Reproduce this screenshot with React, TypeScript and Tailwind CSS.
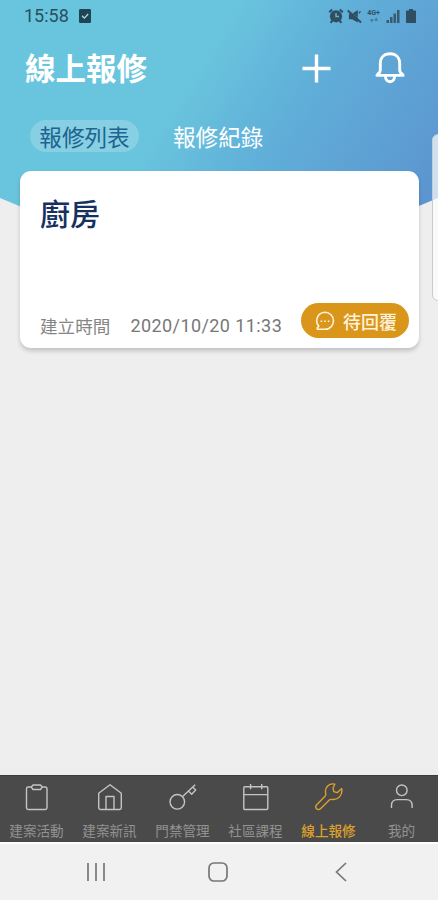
import React from 'react';

type IconProps = { className?: string };

const AlarmIcon = ({ className }: IconProps) => (
  <svg className={className} viewBox="0 0 16 16" fill="none" stroke="currentColor">
    <circle cx="8" cy="8.3" r="6.1" fill="currentColor" stroke="none" />
    <path d="M1.2 4.2 4.2 1.4M14.8 4.2l-3-2.8" strokeWidth="2" />
    <path d="M4.3 12.6 2.6 14.800M11.7 12.6l1.7 2.200" strokeWidth="2" />
    <path d="M8 5v3.5h3" stroke="#66b5d8" strokeWidth="1.4" />
  </svg>
);

const MuteIcon = ({ className }: IconProps) => (
  <svg className={className} viewBox="0 0 16 16" fill="none" stroke="currentColor">
    <path d="M2 5h3.500L11.500 1v13.500L5.500 11H2z" fill="currentColor" stroke="none" />
    <path d="M2.800 1.800 15 13" stroke="#66b1d8" strokeWidth=".7" />
    <path d="M.8 1.500 15 14.400" strokeWidth="2.200" />
    <path d="M12.500 4.500 14.500 2.500" strokeWidth="1.400" />
  </svg>
);

const SignalIcon = ({ className }: IconProps) => (
  <svg className={className} viewBox="0 0 14 14" fill="currentColor">
    <path d="M.5 11H3v3H.5zM4 8h2.500v6H4zM7.500 4.500H10V14H7.500zM11 1h2.500v13H11z" opacity=".85" />
  </svg>
);

const BatteryIcon = ({ className }: IconProps) => (
  <svg className={className} viewBox="0 0 10 14" fill="currentColor">
    <path d="M3 0h4v1.6h2c.6 0 1 .4 1 1V13c0 .6-.4 1-1 1H1c-.6 0-1-.4-1-1V2.600c0-.6.4-1 1-1h2z" />
  </svg>
);

const CheckBoxIcon = ({ className }: IconProps) => (
  <svg className={className} viewBox="0 0 12 14">
    <rect width="12" height="14" rx="1.2" fill="currentColor" />
    <path d="m3 6.800 2.300 2.300L9.200 5" fill="none" stroke="#a9dfec" strokeWidth="1.3" />
  </svg>
);

const BellIcon = () => (
  <svg className="size-8" viewBox="0 0 32 32" fill="none" stroke="white" strokeWidth="2.900" strokeLinejoin="round">
    <path d="M2.900 23.400c.2-1.500 3.400-2.600 3.400-5V11.500C6.300 5.800 10 1.800 16 1.800s9.700 4 9.700 9.700v6.900c0 2.400 3.200 3.500 3.400 5z" />
    <path d="M11.300 24c.3 3.700 1.800 5.700 4.700 5.700s4.400-2 4.700-5.700" />
  </svg>
);

const ChatIcon = () => (
  <svg className="size-5" viewBox="0 0 20 20" fill="none" stroke="#fff3dc" strokeWidth="1.600" strokeLinejoin="round">
    <path d="M10 1.300a8.400 8.400 0 1 1 0 17H2.300v-1.400l1.500-1.700A8.400 8.400 0 0 1 10 1.300z" />
    <path d="M5.600 10.200h1.600M9.200 10.200h1.600M12.800 10.200h1.600" strokeWidth="1.600" />
  </svg>
);

const ICONS = {
  clipboard: (
    <>
      <path d="M8.500 4H5.200A1.700 1.700 0 0 0 3.500 5.700v19.100a1.700 1.700 0 0 0 1.700 1.700h17.100a1.700 1.700 0 0 0 1.700-1.700V5.700A1.700 1.700 0 0 0 22.300 4H19" />
      <path d="M10 2h7.500l1.700 2-1.700 2.500H10L8.300 4z" />
    </>
  ),
  home: (
    <>
      <path d="M2.700 10.200 14 1.700l11.300 8.500v14.600c0 1-.7 1.700-1.700 1.700H4.400c-1 0-1.700-.7-1.700-1.700z" />
      <path d="M10 26.300V13.500h8v12.800" />
    </>
  ),
  key: (
    <>
      <circle cx="8.300" cy="18.800" r="7.300" />
      <path d="M13.600 13.500 26.200 1.700M19.500 8l3.200 3.200 4-4.200-3.100-2.900" />
    </>
  ),
  calendar: (
    <>
      <rect x="1.800" y="3.800" width="24" height="22.700" rx="1" />
      <path d="M1.800 11.600h24M8.600 1v5.200M19.700 1v5.200" />
    </>
  ),
  wrench: (
    <path d="M19.800 1.200c-5.600-1.500-10.500 3.300-9.100 9.300.3 1.200 0 2-.7 2.800L1.500 22a2.800 2.800 0 0 0 0 3.700 2.800 2.800 0 0 0 4 0l8.800-8.600c.8-.8 1.600-.9 2.700-.7 6 1.100 10.900-4.200 9.700-10.800l-4.500 4.100-3.400-1-.8-3.500z" />
  ),
  person: (
    <>
      <circle cx="13.800" cy="7.300" r="5.300" />
      <path d="M3.500 25v-2.600c0-3.600 2.200-5.800 5.800-5.800h9c3.600 0 5.800 2.200 5.800 5.800V25" />
    </>
  ),
};

const TABS: { label: string; icon: keyof typeof ICONS; active?: boolean }[] = [
  { label: '建案活動', icon: 'clipboard' },
  { label: '建案新訊', icon: 'home' },
  { label: '門禁管理', icon: 'key' },
  { label: '社區課程', icon: 'calendar' },
  { label: '線上報修', icon: 'wrench', active: true },
  { label: '我的', icon: 'person' },
];

const StatusBar = () => (
  <div className="flex h-8 items-center justify-between pl-6 pr-[22px] text-[#28505f]">
    <div className="flex items-center gap-[10px]">
      <span className="font-[Roboto] text-[18px] leading-8">15:58</span>
      <CheckBoxIcon className="h-[14px] w-3 text-[#1f4552]" />
    </div>
    <div className="flex items-center text-[#2f4e61]">
      <AlarmIcon className="size-4" />
      <MuteIcon className="ml-[3px] size-[15px]" />
      <div className="ml-1 flex w-[15px] flex-col items-center font-[Roboto] text-[7px] font-bold leading-[7px]">
        <span>4G+</span>
        <svg className="h-[6px] w-2 opacity-50" viewBox="0 0 8 6" fill="currentColor">
          <path d="M0 2h3.600L1.800 6zM4.400 4H8L6.200 0z" />
        </svg>
      </div>
      <SignalIcon className="ml-[5px] size-[14px]" />
      <BatteryIcon className="ml-[6px] h-[14px] w-[10px]" />
    </div>
  </div>
);

const RepairCard = () => (
  <div className="ml-5 mr-[19px] flex h-[177px] flex-col justify-between rounded-[11px] bg-white pl-5 pr-[10px] shadow-[0_3px_4px_rgba(0,0,0,0.18)]">
    <h2 className="pt-[19px] text-[30px] font-medium leading-[44px] text-[#17305f]">廚房</h2>
    <div className="flex items-end pb-[10px]">
      <span className="text-[17.600px] leading-6 text-[#858585]">建立時間</span>
      <span className="ml-5 whitespace-nowrap font-[Roboto] text-[18px] leading-6 tracking-[0.420px] text-[#777]">2020/10/20 11:33</span>
      <div className="ml-auto flex h-[35px] w-[108px] shrink-0 items-center gap-2 rounded-full bg-[#da951b] pl-[14px]">
        <ChatIcon />
        <span className="whitespace-nowrap text-[18px] font-medium leading-none text-[#fff3dc]">待回覆</span>
      </div>
    </div>
  </div>
);

const TabBar = () => (
  <nav className="grid h-[67px] grid-cols-6 border-t border-[#3c3c3c] bg-[#4a4a4a]">
    {TABS.map(({ label, icon, active }) => (
      <div
        key={label}
        className={`flex flex-col items-center pt-[7px] ${active ? 'text-[#dda02a]' : 'text-[#c4c4c4]'}`}
      >
        <svg className="size-7" viewBox="0 0 28 28" fill="none" stroke="currentColor" strokeWidth="1.4" strokeLinejoin="round">
          {ICONS[icon]}
        </svg>
        <span className={`mt-[10px] whitespace-nowrap text-[13.600px] leading-[18px] ${active ? 'font-medium' : 'text-[#929292]'}`}>
          {label}
        </span>
      </div>
    ))}
  </nav>
);

const App: React.FC = () => {
  return (
    <div className="relative flex h-[900px] w-[438px] flex-col overflow-hidden bg-[#eeeeee] font-['Noto_Sans_CJK_TC',sans-serif]">
      {/* Gradient backdrop that tapers to a point behind the card */}
      <div className="absolute inset-x-0 top-0 h-[240px] bg-[linear-gradient(122deg,#69c5dd_40%,#60afd9_61%,#5c95cf_94%)] [clip-path:polygon(0_0,100%_0,100%_198px,77%_240px,23%_240px,0_198px)]" />

      <div className="relative flex min-h-0 flex-1 flex-col">
        <StatusBar />
        <header className="flex h-[72px] items-center pl-[25px] pr-8">
          <h1 className="flex-1 pb-[2px] text-[30.500px] font-bold leading-[44px] text-white">線上報修</h1>
          <svg className="mr-[43px] size-[29px]" viewBox="0 0 29 29" stroke="white" strokeWidth="3.400">
            <path d="M14.500 0.500v28M0.500 14.500h28" />
          </svg>
          <BellIcon />
        </header>
        <div className="flex h-[67px] items-start gap-[34px] pl-[30px] pt-4">
          <span className="flex h-8 w-[109px] items-center justify-center rounded-full bg-white/20 pt-px text-[22.600px] text-[#21638f]">報修列表</span>
          <span className="flex h-8 items-center pt-px text-[22.600px] text-white">報修紀錄</span>
        </div>
        <RepairCard />
      </div>

      {/* Edge panel handle */}
      <div className="absolute left-[432px] top-[134px] h-[167px] w-4 rounded-[6px] border border-[#c8ccd0] bg-white/70" />

      <TabBar />
      <div className="flex h-[58px] items-center border-t-2 border-white bg-[#f1f1f1] pl-[87px]">
        <svg className="h-5 w-[18px]" viewBox="0 0 18 20" stroke="#777" strokeWidth="1.700">
          <path d="M1 1v18M9 1v18M17 1v18" />
        </svg>
        <svg className="ml-[103px] size-5" viewBox="0 0 20 20" fill="none" stroke="#777" strokeWidth="1.700">
          <rect x="1" y="1" width="18" height="18" rx="5" />
        </svg>
        <svg className="ml-[107px] h-5 w-3" viewBox="0 0 12 20" fill="none" stroke="#777" strokeWidth="1.700">
          <path d="M11 1 1.500 10 11 19" />
        </svg>
      </div>
    </div>
  );
};

export default App;
